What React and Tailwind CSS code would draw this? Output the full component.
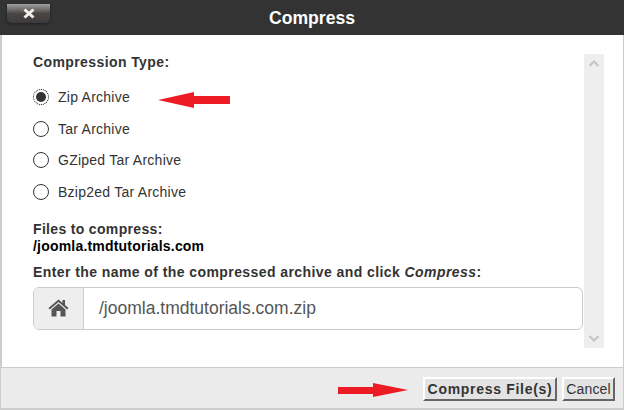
import React from "react";

const Radio = ({ label, checked }) => (
  <label className="flex items-center h-[16px] gap-[9px]">
    <span
      className={
        checked
          ? "flex items-center justify-center w-[16px] h-[16px] rounded-full border border-dotted border-black bg-white"
          : "flex items-center justify-center w-[16px] h-[16px] rounded-full border border-[#333] bg-white"
      }
    >
      {checked && <span className="w-[10px] h-[10px] rounded-full bg-[#333]" />}
    </span>
    <span className="text-[14px] leading-[16px] tracking-[0.25px] text-[#333]">{label}</span>
  </label>
);

export default function App() {
  return (
    <div className="relative w-[624px] h-[410px] flex flex-col bg-white overflow-hidden font-['Liberation_Sans',Arial,sans-serif] text-[#333]">
      <header className="relative h-[35px] shrink-0 bg-[#333] flex items-center justify-center">
        <span className="text-white font-bold text-[17.6px] leading-[20px]">Compress</span>
        <div className="absolute left-[7px] top-[4px] w-[43px] h-[19px] rounded-b-[5px] bg-[linear-gradient(#a0a0a0_0%,#777372_25%,#4a4644_50%,#3e3a39_100%)] shadow-[0_1px_2px_1px_#22292c] flex items-center justify-center">
          <svg width="12" height="11" viewBox="0 0 12 11">
            <path d="M1.5 1.5 L10.5 9.5 M10.5 1.5 L1.5 9.5" stroke="#f2f2f2" strokeWidth="3" fill="none" />
          </svg>
        </div>
      </header>

      <main className="flex-1 flex border-l-[2px] border-r-[1px] border-[#ccc] min-h-0">
        <div className="flex-1 pl-[31px] pt-[19px]">
          <h2 className="font-bold text-[14px] leading-[16px] tracking-[0.4px]">Compression Type:</h2>
          <div className="mt-[19px] flex flex-col gap-[15.6px]">
            <Radio label="Zip Archive" checked />
            <Radio label="Tar Archive" />
            <Radio label="GZiped Tar Archive" />
            <Radio label="Bzip2ed Tar Archive" />
          </div>
          <p className="mt-[21px] font-bold text-[14px] leading-[17px] tracking-[0.33px]">Files to compress:</p>
          <p className="font-bold text-[14px] leading-[17px] tracking-[0.2px] text-black">/joomla.tmdtutorials.com</p>
          <p className="mt-[9px] font-bold text-[14px] leading-[17px] tracking-[0.42px]">
            Enter the name of the compressed archive and click <em>Compress</em>:
          </p>
          <div className="mt-[6px] flex w-[550px] h-[43px] border border-[#ccc] rounded-[6px] overflow-hidden">
            <div className="w-[50px] bg-[#eee] border-r border-[#ccc] flex items-center justify-center">
              <svg width="21" height="18" viewBox="0 0 21 18">
                <path
                  fill="#555"
                  d="M10.5 0.5 L0.5 9 L1.8 10.4 L10.5 3 L19.2 10.4 L20.5 9 L17 6 V1 H14.5 V3.9 Z M10.5 4.6 L3.5 10.5 V17.5 H8.5 V12 H12.5 V17.5 H17.5 V10.5 Z"
                />
              </svg>
            </div>
            <div className="flex-1 flex items-center pl-[15px] text-[17.5px] text-[#555]">/joomla.tmdtutorials.com.zip</div>
          </div>
        </div>
        <aside className="w-[20px] mt-[19px] mb-[19px] mr-[19px] bg-[#eee] flex flex-col justify-between items-center py-[6px]">
          <svg width="10" height="7" viewBox="0 0 10 7">
            <path d="M0.5 6 L5 1.5 L9.5 6" stroke="#c4c4c4" strokeWidth="2" fill="none" />
          </svg>
          <svg width="10" height="7" viewBox="0 0 10 7">
            <path d="M0.5 1 L5 5.5 L9.5 1" stroke="#c4c4c4" strokeWidth="2" fill="none" />
          </svg>
        </aside>
      </main>

      <footer className="h-[43px] shrink-0 bg-[#ebebeb] border-t-[1px] border-b-[2px] border-x-[1px] border-[#ccc] flex items-start justify-end pt-[9px] pr-[8px] gap-[5px]">
        <button className="h-[24px] w-[134px] bg-[#e3e3e3] border-2 border-t-white border-l-white border-r-[#666] border-b-[#666] font-bold text-[14px] leading-none tracking-[0.7px] text-[#333]">
          Compress File(s)
        </button>
        <button className="h-[24px] w-[53px] bg-[#e3e3e3] border-2 border-t-white border-l-white border-r-[#666] border-b-[#666] text-[14px] leading-none tracking-[0.15px] text-[#333]">
          Cancel
        </button>
      </footer>

      <svg className="absolute left-[158px] top-[92px]" width="72" height="16" viewBox="0 0 72 16">
        <polygon fill="#ed1c24" points="0,8 36,0 36,4 72,4 72,12 36,12 36,16" />
      </svg>
      <svg className="absolute left-[338px] top-[383px]" width="70" height="14" viewBox="0 0 70 14">
        <polygon fill="#ed1c24" points="70,7 35,0 35,4 0,4 0,11 35,11 35,14" />
      </svg>
    </div>
  );
}
